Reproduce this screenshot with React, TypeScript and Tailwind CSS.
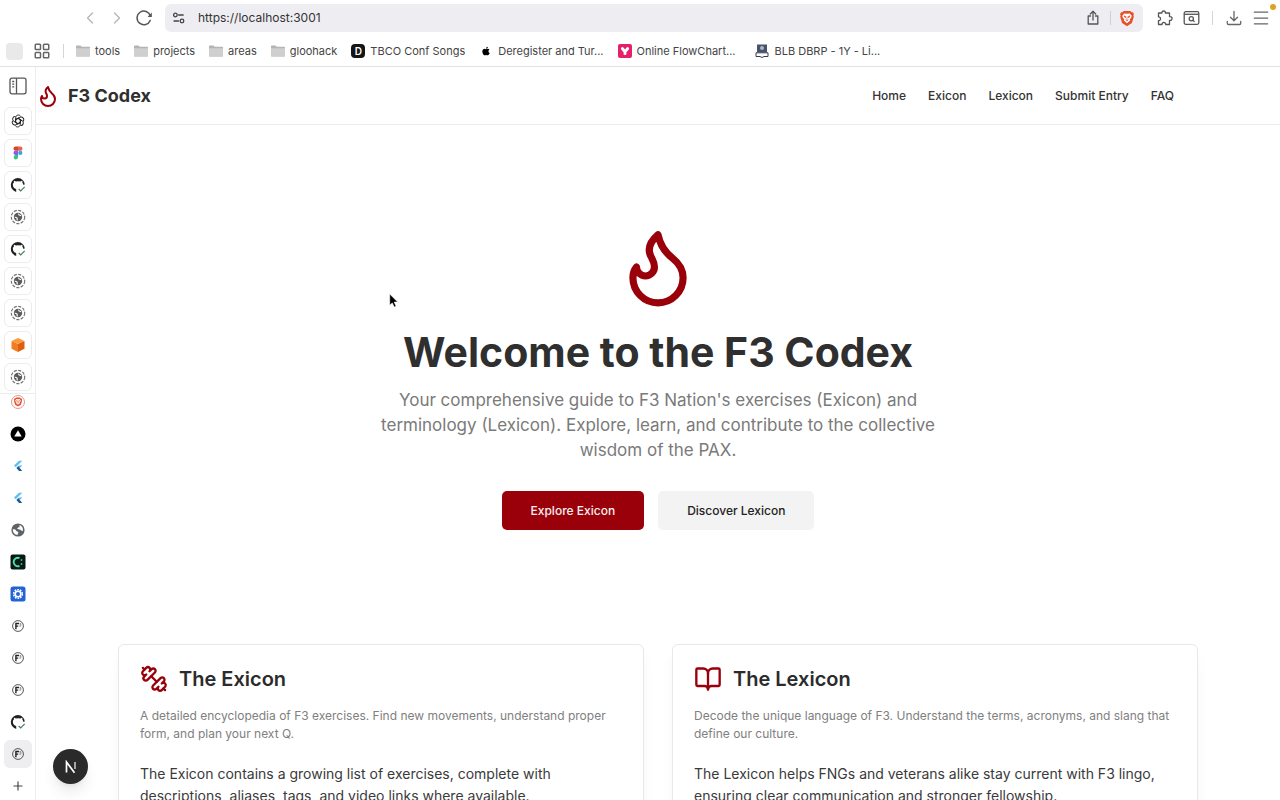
import React from "react";
import {
  BookOpen,
  ChevronLeft,
  ChevronRight,
  LayoutGrid,
  Menu,
  Plus,
} from "lucide-react";
import { FaApple } from "react-icons/fa";

type IconProps = { className?: string };

/* Page icons */
function Flame({ className }: IconProps) {
  return (
    <svg
      viewBox="0 0 24 24"
      fill="none"
      stroke="currentColor"
      strokeWidth="2"
      strokeLinecap="round"
      strokeLinejoin="round"
      className={className}
    >
      <path d="M8.5 14.5A2.5 2.5 0 0 0 11 12c0-1.38-.5-2-1-3-1.072-2.143-.224-4.054 2-6 .5 2.5 2 4.9 4 6.5 2 1.6 3 3.5 3 5.5a7 7 0 1 1-14 0c0-1.153.433-2.294 1-3a2.5 2.5 0 0 0 2.5 2.5z" />
    </svg>
  );
}

function Dumbbell({ className }: IconProps) {
  return (
    <svg
      viewBox="0 0 24 24"
      fill="none"
      stroke="currentColor"
      strokeWidth="2"
      strokeLinecap="round"
      strokeLinejoin="round"
      className={className}
    >
      <path d="M14.4 14.4 9.6 9.6" />
      <path d="M18.657 21.485a2 2 0 1 1-2.829-2.828l-1.767 1.768a2 2 0 1 1-2.829-2.829l6.364-6.364a2 2 0 1 1 2.829 2.829l-1.768 1.767a2 2 0 1 1 2.828 2.829z" />
      <path d="m21.5 21.5-1.4-1.4" />
      <path d="M3.9 3.9 2.5 2.5" />
      <path d="M6.404 12.768a2 2 0 1 1-2.829-2.829l1.768-1.767a2 2 0 1 1-2.828-2.829l2.828-2.828a2 2 0 1 1 2.829 2.828l1.767-1.768a2 2 0 1 1 2.829 2.829z" />
    </svg>
  );
}

/* Toolbar icons */
function Reload() {
  return (
    <svg viewBox="0 0 18 18" fill="none" className="size-[18px]">
      <path d="M15.2 11.4A6.8 6.8 0 1 1 15.4 7" stroke="#555" strokeWidth="1.5" strokeLinecap="round" />
      <path d="M12.6 7.9h4.2V3.6z" fill="#555" />
    </svg>
  );
}

function Sliders() {
  return (
    <svg viewBox="0 0 14 12" fill="none" stroke="#444" strokeWidth="1.3" strokeLinecap="round" className="h-3 w-3.5">
      <circle cx="3.4" cy="3" r="1.8" />
      <path d="M6.6 3h4.6M2 9h4.6" />
      <circle cx="10" cy="9" r="1.8" />
    </svg>
  );
}

function Share() {
  return (
    <svg viewBox="0 0 14 16" fill="none" stroke="#555" strokeWidth="1.3" strokeLinecap="round" strokeLinejoin="round" className="h-4 w-3.5">
      <path d="M4.5 6H2.2v8h9.6V6H9.5M7 10V1.5M4.3 4 7 1.3 9.7 4" />
    </svg>
  );
}

function BraveLion({ className }: IconProps) {
  return (
    <svg viewBox="0 0 16 18" className={className}>
      <path d="M4.5 1h7l1.4 1.5 1.4-.2 1 2-.5 1.6.4 1.3-2 6.600L8 17.3l-5.2-3.5L.8 7.2l.4-1.300-.5-1.600 1-2 1.400.2z" fill="#e8502b" />
      <path d="m5 3.600 3 .5 3-.5 2 2.500-.6 2-1.400 1.600.3 1.500L8 14l-3.300-2.800.3-1.500L3.600 8.100l-.6-2z" fill="#fff" />
      <path d="m4.800 6.300 2 .6-.5 1.400zM11.200 6.300l-2 .6.5 1.400zM8 7v3M6.600 10.200 8 11.500l1.400-1.300" fill="#e8502b" stroke="#e8502b" strokeWidth=".7" />
    </svg>
  );
}

function PuzzlePiece() {
  return (
    <svg viewBox="0 0 18 18" fill="none" stroke="#555" strokeWidth="1.3" strokeLinejoin="round" className="size-[18px]">
      <path d="M2.5 4h3.4c-.5-2.700 4-2.700 3.500 0H13.5v3.7c3.400-.6 3.400 4.200 0 3.600v4.200H9.700c.3-2.800-4-2.800-3.700 0H2.5v-3.900c2.700.3 2.700-4 0-3.700z" />
    </svg>
  );
}

function TabSearch() {
  return (
    <svg viewBox="0 0 17 16" fill="none" stroke="#555" strokeWidth="1.3" className="h-4 w-[17px]">
      <rect x="1.2" y="1.7" width="14.6" height="12.6" rx="1.5" />
      <path d="M1.2 4.3h14.6" />
      <circle cx="8.3" cy="8.7" r="2.1" />
      <path d="m9.9 10.3 1.6 1.6" />
    </svg>
  );
}

function DownloadTray() {
  return (
    <svg viewBox="0 0 16 16" fill="none" stroke="#666" strokeWidth="1.3" strokeLinecap="round" strokeLinejoin="round" className="size-4">
      <path d="M8 1.5v9M4.5 7.3 8 10.7l3.5-3.4M1.3 11.5v1.7c0 .8.5 1.3 1.3 1.3h10.8c.8 0 1.300-.5 1.300-1.300v-1.700" />
    </svg>
  );
}

/* Bookmark icons */
function Folder() {
  return (
    <svg viewBox="0 0 14 12" className="h-3 w-3.5 shrink-0">
      <path d="M0 1.5C0 .8.4.5 1 .5h3.5l1.2 1.3H13c.6 0 1 .4 1 1v7.7c0 .6-.4 1-1 1H1c-.6 0-1-.4-1-1z" fill="#b4b4b4" />
      <path d="M0 3.2h14v7.3c0 .6-.4 1-1 1H1c-.6 0-1-.4-1-1z" fill="#cfcfcf" />
    </svg>
  );
}

function LetterD() {
  return (
    <span className="flex size-3.5 items-center justify-center rounded-sm bg-[#151515] text-[10px] font-semibold text-white">
      D
    </span>
  );
}

function Apple() {
  return (
    <span className="flex size-3.5 items-center justify-center">
      <FaApple className="size-2.5 text-black" />
    </span>
  );
}

function PinkV() {
  return (
    <svg viewBox="0 0 14 14" className="size-3.5 shrink-0">
      <rect width="14" height="14" rx="2" fill="#e5206b" />
      <path d="M4.4 4.6 7 7.8l2.6-3.2M7 7.8v1.8" stroke="#fff" strokeWidth="3" strokeLinecap="round" fill="none" />
    </svg>
  );
}

function LibraryBook() {
  return (
    <svg viewBox="0 0 14 14" className="size-3.5 shrink-0">
      <path d="M2 .5h10v8H2z" fill="#46536b" />
      <circle cx="7" cy="4" r="2" fill="#aab6c8" />
      <path d="M1 8.8h12v3.7H9l-2 1-2-1H1z" fill="#fff" stroke="#333b4d" />
    </svg>
  );
}

/* Vertical tab icons */
function PanelToggle() {
  return (
    <svg viewBox="0 0 18 18" fill="none" stroke="#555" strokeWidth="1.3" className="size-[18px]">
      <rect x="1" y="1.2" width="16" height="15.6" rx="2" />
      <path d="M7.5 1.200v15.600M3.200 4.500h2M3.200 7.200h2M3.200 9.900h2" />
    </svg>
  );
}

function OpenAiKnot() {
  return (
    <svg viewBox="0 0 14 14" fill="none" stroke="#2a2a2a" strokeWidth="1" className="size-3.5">
      {[0, 60, 120, 180, 240, 300].map((deg) => (
        <path
          key={deg}
          d="M4.7 8.2V3.7C4.7.7 8.6.1 9.7 2.5M4.8 5.5l2.3-1.3 3.1 1.8"
          transform={`rotate(${deg} 7 7)`}
        />
      ))}
    </svg>
  );
}

function Figma() {
  return (
    <svg viewBox="0 0 10 14" className="h-3.5 w-2.5">
      <path d="M5 .5H2.6a2.15 2.15 0 0 0 0 4.3H5z" fill="#d8432f" />
      <path d="M5 .5h2.4a2.15 2.15 0 0 1 0 4.3H5z" fill="#f0604d" />
      <path d="M5 4.8H2.6a2.15 2.15 0 0 0 0 4.3H5z" fill="#9058f0" />
      <circle cx="7.3" cy="6.95" r="2.15" fill="#2fa8f0" />
      <path d="M5 9.1H2.6A2.15 2.15 0 1 0 5 11.25z" fill="#2bc77a" />
    </svg>
  );
}

function GithubCheck() {
  return (
    <svg viewBox="0 0 16 16" fill="none" className="size-4">
      <path d="M6.2 14.9A7 7 0 1 1 14.8 7.5l-1.700.3c0-1-.3-1.600-.8-2.200.2-.6.2-1.300 0-1.800-.7 0-1.300.3-1.800.7a9 9 0 0 0-4.700 0c-.5-.4-1.100-.7-1.800-.7-.2.500-.2 1.200 0 1.800C3 6.300 2.900 7 2.900 8c0 2.200 1.200 3.500 3.300 3.900z" fill="#222" />
      <path d="m8.700 12 2 2 4-4.200" stroke="#4a7a58" strokeWidth="1.2" />
    </svg>
  );
}

function DashedGlobe() {
  return (
    <svg viewBox="0 0 16 16" fill="none" className="size-4">
      <circle cx="8" cy="8" r="6.7" stroke="#777" strokeWidth="1.200" strokeDasharray="3.200 1.300" />
      <circle cx="8" cy="8" r="4.200" fill="#5c5c5c" />
      <path d="M4.800 8.300c1.600-.2 2.200.500 2.400 1.200.2.800.1 1.400-.3 2M8.300 4.600c.4 1.500 1.400 2 2.900 2.100" stroke="#fff" strokeWidth="1.200" />
    </svg>
  );
}

function OrangeCube() {
  return (
    <svg viewBox="0 0 16 16" className="size-4">
      <path d="m8 1 6.500 3L8 7 1.500 4z" fill="#fb9a3c" />
      <path d="M1.500 4 8 7v8l-6.500-3.200z" fill="#f47c20" />
      <path d="M14.500 4 8 7v8l6.500-3.200z" fill="#dd5f10" />
    </svg>
  );
}

function BraveRound() {
  return (
    <span className="flex size-3.5 items-center justify-center rounded-full border border-[#d99a92]">
      <BraveLion className="size-2.5" />
    </span>
  );
}

function VercelMark() {
  return (
    <svg viewBox="0 0 16 16" className="size-4">
      <circle cx="8" cy="8" r="7.5" fill="#000" />
      <path d="m8 4.300 3.700 6.200H4.300z" fill="#fff" />
    </svg>
  );
}

function FlutterMark() {
  return (
    <svg viewBox="0 0 10 12" className="h-3 w-2.5">
      <path d="M6 .8h3.300L2.700 7.200 1 5.500z" fill="#64bdf0" />
      <path d="M6 5.400h3.300L6.500 8.200 4.400 8.400 3.500 7.900z" fill="#5bb5ea" />
      <path d="m3.500 7.900 1.700-1.600L9.300 10.900H6z" fill="#1b5a92" />
    </svg>
  );
}

function Globe() {
  return (
    <svg viewBox="0 0 14 14" className="size-3.5">
      <circle cx="7" cy="7" r="6.6" fill="#5f6368" />
      <path d="M1.800 6.500c2-.6 3 .3 3.300 1.300.5 1 2 .5 2.200 1.700.1 1-.8 1.200-.8 2.600-2.800-.4-4.800-2.700-4.700-5.600zM8.600 1.900C8 3 9 3.200 8.300 4.200c-.6.800-2 .3-2 1.300 0 1.200 2.200.7 3.200 1.300.8.500 1 1.500 2.300 1.200.7-2.700-.6-5.200-3.200-6.100z" fill="#fff" />
    </svg>
  );
}

function GreenC() {
  return (
    <svg viewBox="0 0 16 16" fill="none" className="size-4">
      <rect x=".5" y=".5" width="15" height="15" rx="2" fill="#071a15" />
      <path d="M9.500 4A4.300 4.300 0 1 0 9.500 12" stroke="#4be0a0" strokeWidth="1.9" />
      <path d="M11.500 5.200v1.600M11.500 9.200v1.600" stroke="#4be0a0" strokeWidth="1.5" />
    </svg>
  );
}

function BlueGear() {
  return (
    <svg viewBox="0 0 16 16" fill="none" className="size-4">
      <rect x=".5" y=".5" width="15" height="15" rx="2.5" fill="#2463d6" />
      <circle cx="8" cy="8" r="4.300" stroke="#fff" strokeWidth="1.600" strokeDasharray="1.700 1" />
      <circle cx="8" cy="8" r="2.800" stroke="#fff" strokeWidth="1.600" />
    </svg>
  );
}

function F3Badge() {
  return (
    <svg viewBox="0 0 12 12" fill="none" className="size-3">
      <circle cx="6" cy="6" r="5.4" stroke="#444" strokeWidth=".9" />
      <path d="M3.900 9.300V3.500H7M3.900 6.100h2.300" stroke="#222" strokeWidth="1.4" />
      <path d="M7.500 3.500h1.400v2.700H7.300M7.500 4.800h1.300" stroke="#666" strokeWidth=".6" />
    </svg>
  );
}

function Pointer() {
  return (
    <svg viewBox="0 0 10 15" className="h-[15px] w-2.5">
      <path d="M.7.900v11.300l2.600-2.300 1.900 4.200 1.900-.9-1.900-4.100h3.500z" fill="#000" stroke="#fff" strokeWidth=".6" />
    </svg>
  );
}

const bookmarks = [
  { label: "tools", icon: Folder },
  { label: "projects", icon: Folder },
  { label: "areas", icon: Folder },
  { label: "gloohack", icon: Folder },
  { label: "TBCO Conf Songs", icon: LetterD },
  { label: "Deregister and Tur...", icon: Apple },
  { label: "Online FlowChart...", icon: PinkV },
  { label: "BLB DBRP - 1Y - Li...", icon: LibraryBook },
];

const pinnedTabs = [
  { name: "ChatGPT", icon: OpenAiKnot },
  { name: "Figma", icon: Figma },
  { name: "GitHub checks", icon: GithubCheck },
  { name: "Site 1", icon: DashedGlobe },
  { name: "GitHub pull request", icon: GithubCheck },
  { name: "Site 2", icon: DashedGlobe },
  { name: "Site 3", icon: DashedGlobe },
  { name: "Cube", icon: OrangeCube },
  { name: "Site 4", icon: DashedGlobe },
];

const openTabs = [
  { name: "Vercel", icon: VercelMark },
  { name: "Flutter", icon: FlutterMark },
  { name: "Flutter docs", icon: FlutterMark },
  { name: "Web page", icon: Globe },
  { name: "Console", icon: GreenC },
  { name: "Settings", icon: BlueGear },
  { name: "F3 Nation", icon: F3Badge },
  { name: "F3 Exicon", icon: F3Badge },
  { name: "F3 Lexicon", icon: F3Badge },
  { name: "GitHub", icon: GithubCheck },
  { name: "F3 Codex", icon: F3Badge, active: true },
];

const navLinks = ["Home", "Exicon", "Lexicon", "Submit Entry", "FAQ"];

const cards = [
  {
    title: "The Exicon",
    icon: Dumbbell,
    description:
      "A detailed encyclopedia of F3 exercises. Find new movements, understand proper form, and plan your next Q.",
    body: "The Exicon contains a growing list of exercises, complete with descriptions, aliases, tags, and video links where available.",
  },
  {
    title: "The Lexicon",
    icon: BookOpen,
    description:
      "Decode the unique language of F3. Understand the terms, acronyms, and slang that define our culture.",
    body: "The Lexicon helps FNGs and veterans alike stay current with F3 lingo, ensuring clear communication and stronger fellowship.",
  },
];

function ToolButton({ label, children }: { label: string; children: React.ReactNode }) {
  return (
    <button type="button" aria-label={label} className="flex h-7 w-[27px] shrink-0 items-center justify-center">
      {children}
    </button>
  );
}

function BrowserBar() {
  return (
    <div className="border-b border-[#e2e2e4] bg-white">
      <div className="flex h-9 items-center pl-[76px] pr-1.5">
        <ToolButton label="Back">
          <ChevronLeft className="size-5 text-[#b5b5b5]" strokeWidth={1.5} />
        </ToolButton>
        <ToolButton label="Forward">
          <ChevronRight className="size-5 text-[#b5b5b5]" strokeWidth={1.5} />
        </ToolButton>
        <ToolButton label="Reload">
          <Reload />
        </ToolButton>
        <div className="mx-2 flex h-7 flex-1 items-center rounded-md bg-[#eeeef2] pl-[7px] pr-1">
          <Sliders />
          <input
            aria-label="Address"
            defaultValue="https://localhost:3001"
            className="ml-3 min-w-0 flex-1 bg-transparent text-[12px] text-[#333] outline-none"
          />
          <ToolButton label="Share">
            <Share />
          </ToolButton>
          <span className="mx-1 h-3.5 w-px bg-[#cfcfd4]" />
          <button type="button" aria-label="Brave Shields" className="flex w-6 justify-center">
            <BraveLion className="h-[17px] w-4" />
          </button>
        </div>
        <ToolButton label="Extensions">
          <PuzzlePiece />
        </ToolButton>
        <ToolButton label="Search tabs">
          <TabSearch />
        </ToolButton>
        <span className="mx-[7px] h-3.5 w-px bg-[#d5d5d5]" />
        <ToolButton label="Downloads">
          <DownloadTray />
        </ToolButton>
        <div className="relative">
          <ToolButton label="Menu">
            <Menu className="size-5 text-[#666]" strokeWidth={1.5} />
          </ToolButton>
          <span className="absolute -right-0.5 top-0 size-1.5 rounded-full bg-[#e0a21c]" />
        </div>
      </div>

      <div className="flex h-[30px] items-center pl-1.5 text-[11px] text-[#444]">
        <span className="size-[17px] rounded-sm bg-[#e9e9e9]" />
        <button type="button" aria-label="All bookmarks" className="ml-2.5">
          <LayoutGrid className="size-[18px] text-[#666]" strokeWidth={2} />
        </button>
        <span className="mx-3 h-3.5 w-px bg-[#d5d5d5]" />
        <nav className="flex items-center gap-3.5">
          {bookmarks.map(({ label, icon: Icon }) => (
            <a key={label} href="#" className="flex items-center gap-[5px] whitespace-nowrap last:ml-1.5">
              <Icon />
              {label}
            </a>
          ))}
        </nav>
      </div>
    </div>
  );
}

function TabStrip() {
  return (
    <aside className="flex w-9 shrink-0 flex-col overflow-hidden border-r border-[#ededed] bg-white">
      <div className="flex h-[37px] shrink-0 items-center justify-center">
        <button type="button" aria-label="Toggle vertical tabs">
          <PanelToggle />
        </button>
      </div>

      {/* Pinned */}
      <div className="border-b border-[#ececec] pt-px">
        {pinnedTabs.map(({ name, icon: Icon }) => (
          <div key={name} className="flex h-8 items-center justify-center">
            <button
              type="button"
              aria-label={name}
              className="flex size-7 items-center justify-center rounded-md border border-[#ececee]"
            >
              <Icon />
            </button>
          </div>
        ))}
      </div>

      {/* Open tabs */}
      <button type="button" aria-label="Brave" className="mb-2 flex h-4 shrink-0 items-center justify-center">
        <BraveRound />
      </button>
      {openTabs.map(({ name, icon: Icon, active }) => (
        <div key={name} className="flex h-8 shrink-0 items-center justify-center">
          <button
            type="button"
            aria-label={name}
            className={`flex size-7 items-center justify-center rounded-md ${active ? "bg-[#eeeef0]" : ""}`}
          >
            <Icon />
          </button>
        </div>
      ))}
      <button type="button" aria-label="New tab" className="flex h-8 shrink-0 items-center justify-center">
        <Plus className="size-3.5 text-[#444]" strokeWidth={2} />
      </button>
    </aside>
  );
}

function SiteHeader() {
  return (
    <header className="flex h-[58px] items-center justify-between border-b border-[#ececec] pr-[106px]">
      <a href="#" className="flex items-center gap-2 text-[18px] font-bold text-[#2f2f2f]">
        <Flame className="size-6 text-[#990009]" />
        F3 Codex
      </a>
      <nav className="flex items-center gap-[22px] text-[12px] font-medium text-[#333]">
        {navLinks.map((label) => (
          <a key={label} href="#">
            {label}
          </a>
        ))}
      </nav>
    </header>
  );
}

function Hero() {
  return (
    <section className="flex flex-col items-center pt-[99px] text-center">
      <Flame className="size-[86px] text-[#990009]" />
      <h1 className="mt-[18px] text-[41px] font-bold leading-[48px] text-[#2f2f2f]">
        Welcome to the F3 Codex
      </h1>
      <p className="mt-3 max-w-[605px] text-[17px] leading-[25px] text-[#7a7a7a]">
        Your comprehensive guide to F3 Nation's exercises (Exicon) and terminology (Lexicon). Explore,
        learn, and contribute to the collective wisdom of the PAX.
      </p>
      <div className="mt-7 flex gap-3.5 text-[12px] font-medium">
        <button type="button" className="h-[39px] rounded-[5px] bg-[#990009] px-[29px] text-[#faf0f0]">
          Explore Exicon
        </button>
        <button type="button" className="h-[39px] rounded-[5px] bg-[#f3f3f3] px-[29px] text-[#222]">
          Discover Lexicon
        </button>
      </div>
    </section>
  );
}

export default function App() {
  return (
    <div className="flex h-screen flex-col overflow-hidden bg-white font-[Inter,sans-serif]">
      <BrowserBar />
      <div className="relative flex min-h-0 flex-1">
        <TabStrip />
        <div className="min-w-0 flex-1 overflow-hidden">
          <SiteHeader />
          <main>
            <Hero />
            <section className="mx-auto mt-[114px] grid max-w-[1080px] grid-cols-2 gap-7">
              {cards.map(({ title, icon: Icon, description, body }) => (
                <article
                  key={title}
                  className="rounded-md border border-[#e8e8e8] px-[21px] pb-6 pt-5 shadow-lg shadow-black/5"
                >
                  <h2 className="flex items-center gap-[11px] text-[20px] font-semibold leading-7 text-[#2b2b2b]">
                    <Icon className="size-7 text-[#990009]" />
                    {title}
                  </h2>
                  <p className="mt-3.5 text-[12px] leading-[18px] text-[#808080]">{description}</p>
                  <p className="mt-5 text-[14px] leading-[22px] text-[#3a3a3a]">{body}</p>
                </article>
              ))}
            </section>
          </main>
        </div>

        {/* Dev tools badge */}
        <button
          type="button"
          aria-label="Open Next.js dev tools"
          className="absolute bottom-4 left-[53px] flex size-[35px] items-center justify-center rounded-full bg-[#2a2a2a] shadow-lg"
        >
          <svg viewBox="0 0 14 14" fill="none" stroke="#fff" strokeWidth="1.7" className="size-3.5">
            <path d="M2.5 12.5V2l8 10.800" />
            <path d="M11 2v7" stroke="#bbb" />
          </svg>
        </button>

        <div className="pointer-events-none absolute left-[389px] top-[226px]">
          <Pointer />
        </div>
      </div>
    </div>
  );
}
